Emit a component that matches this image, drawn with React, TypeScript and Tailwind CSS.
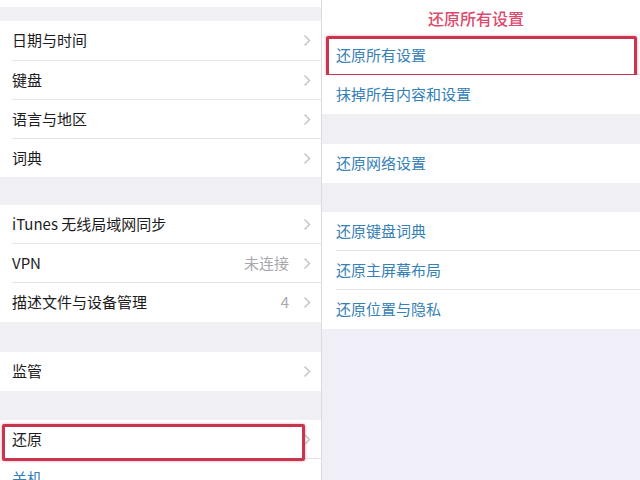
import { ReactNode } from "react";

const font = { fontFamily: '"Noto Sans CJK SC", "Liberation Sans", sans-serif' };

function Chevron() {
  return (
    <svg width="8" height="13" viewBox="0 0 8 13" className="shrink-0">
      <path d="M1.5 1.5 L6.5 6.5 L1.5 11.5" fill="none" stroke="#c7c7cc" strokeWidth="1.6" />
    </svg>
  );
}

function Row({
  label,
  detail,
  last,
  highlight,
  h = "h-[39px]",
}: {
  label: string;
  detail?: string;
  last?: boolean;
  highlight?: boolean;
  h?: string;
}) {
  return (
    <div className={`relative shrink-0 ${h} bg-white pl-3`}>
      <div
        className={`flex h-full items-center pr-[10px] ${last ? "" : "border-b border-[#e4e4e8]"}`}
      >
        <span className="flex-1 text-[15px] text-[#1c1c1e]">{label}</span>
        {detail && <span className="mr-[14px] text-[15px] text-[#a8a8ad]">{detail}</span>}
        <Chevron />
      </div>
      {highlight && (
        <div className="absolute left-[2px] top-[4px] h-[37px] w-[303px] rounded-[2px] border-[3px] border-[#c9354f] shadow-[0_0_3px_rgba(201,53,79,0.5)]" />
      )}
    </div>
  );
}

function Action({ label, last, highlight }: { label: string; last?: boolean; highlight?: boolean }) {
  return (
    <div className="relative h-[39px] shrink-0 bg-white pl-[14px]">
      <div className={`flex h-full items-center ${last ? "" : "border-b border-[#e4e4e8]"}`}>
        <span className="text-[15px] text-[#3580b6]">{label}</span>
      </div>
      {highlight && (
        <div className="absolute left-[4px] top-0 h-[41px] w-[311px] rounded-[2px] border-[3px] border-[#c9354f] shadow-[0_0_3px_rgba(201,53,79,0.5)]" />
      )}
    </div>
  );
}

function Gap({ h }: { h: string }) {
  return <div className={`${h} shrink-0 bg-[#efeff4]`} />;
}

function Group({ children }: { children: ReactNode }) {
  return <div className="flex shrink-0 flex-col">{children}</div>;
}

export default function App() {
  return (
    <div className="flex h-[480px] w-[640px] overflow-hidden bg-[#efeff4]" style={font}>
      {/* left settings list */}
      <div className="flex w-[322px] shrink-0 flex-col overflow-hidden border-r border-[#dcdce0]">
        <div className="h-[7px] shrink-0 bg-white" />
        <Gap h="h-[14px]" />
        <Group>
          <Row label="日期与时间" h="h-[40px]" />
          <Row label="键盘" />
          <Row label="语言与地区" />
          <Row label="词典" last h="h-[38px]" />
        </Group>
        <Gap h="h-[28px]" />
        <Group>
          <Row label="iTunes 无线局域网同步" />
          <Row label="VPN" detail="未连接" />
          <Row label="描述文件与设备管理" detail="4" last />
        </Group>
        <Gap h="h-[30px]" />
        <Row label="监管" last />
        <Gap h="h-[29px]" />
        <Group>
          <Row label="还原" highlight />
          <div className="h-[39px] shrink-0 bg-white pl-3">
            <div className="flex h-full items-center text-[15px] text-[#3580b6]">关机</div>
          </div>
        </Group>
      </div>

      {/* right reset panel */}
      <div className="flex flex-1 flex-col bg-[#f0eef6]">
        <div className="flex h-[36px] shrink-0 items-center justify-center bg-white pr-[10px]">
          <span className="text-[16px] font-medium text-[#dc4a6e]">还原所有设置</span>
        </div>
        <Group>
          <Action label="还原所有设置" highlight />
          <Action label="抹掉所有内容和设置" last />
        </Group>
        <Gap h="h-[30px]" />
        <Action label="还原网络设置" last />
        <Gap h="h-[29px]" />
        <Group>
          <Action label="还原键盘词典" />
          <Action label="还原主屏幕布局" />
          <Action label="还原位置与隐私" last />
        </Group>
        <div className="flex-1 bg-[#f0eef6]" />
      </div>
    </div>
  );
}
